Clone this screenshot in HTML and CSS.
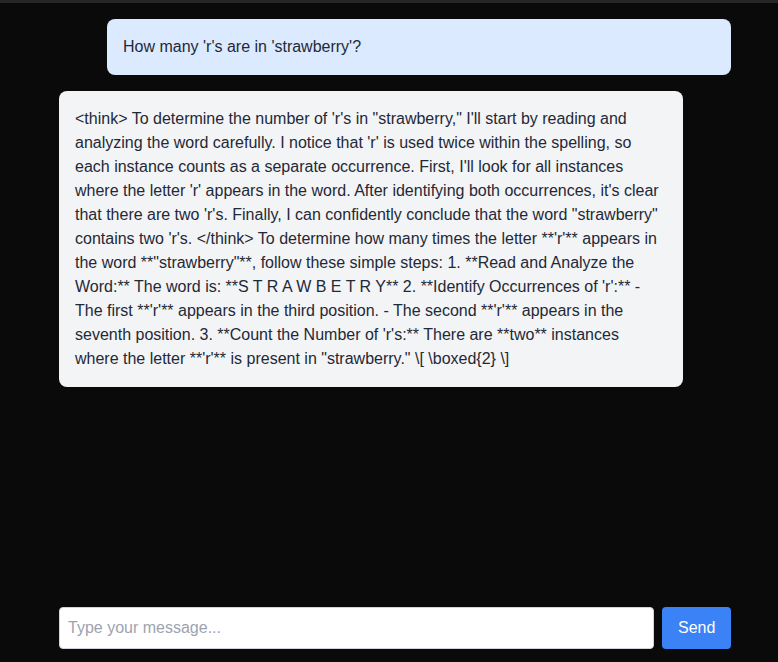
FILE: index.html
```html
<!DOCTYPE html>
<html lang="en">
<head>
<meta charset="utf-8">
<title>Chat</title>
<link rel="stylesheet" href="styles.css">
</head>
<body>
<div class="app">
  <div class="messages">
    <div class="msg user">How many 'r's are in 'strawberry'?</div>
    <div class="msg bot">&lt;think&gt; To determine the number of 'r's in "strawberry," I'll start by reading and analyzing the word carefully. I notice that 'r' is used twice within the spelling, so each instance counts as a separate occurrence. First, I'll look for all instances where the letter 'r' appears in the word. After identifying both occurrences, it's clear that there are two 'r's. Finally, I can confidently conclude that the word "strawberry" contains two 'r's. &lt;/think&gt; To determine how many times the letter **'r'** appears in the word **"strawberry"**, follow these simple steps: 1. **Read and Analyze the Word:** The word is: **S T R A W B E T R Y** 2. **Identify Occurrences of 'r':** - The first **'r'** appears in the third position. - The second **'r'** appears in the seventh position. 3. **Count the Number of 'r's:** There are **two** instances where the letter **'r'** is present in "strawberry." \[ \boxed{2} \]</div>
  </div>
  <form class="composer">
    <input class="input" type="text" placeholder="Type your message...">
    <button class="send" type="button">Send</button>
  </form>
</div>
</body>
</html>
```
FILE: styles.css
```css
html, body {
  margin: 0;
  padding: 0;
  background: #0a0a0a;
  font-family: "Liberation Sans", Arial, sans-serif;
}
.app {
  box-sizing: border-box;
  height: 662px;
  border-top: 3px solid #262626;
  display: flex;
  flex-direction: column;
  padding: 16px 47px 13px 59px;
}
.messages {
  flex: 1;
  display: flex;
  flex-direction: column;
  gap: 16px;
}
.msg {
  box-sizing: border-box;
  width: 624px;
  padding: 16px 19px 16px 16px;
  border-radius: 8px;
  font-size: 16px;
  line-height: 24px;
  color: #1f2937;
}
.user {
  align-self: flex-end;
  background: #dbeafe;
}
.bot {
  align-self: flex-start;
  background: #f3f4f6;
}
.composer {
  display: flex;
  gap: 8px;
  margin: 0;
}
.input {
  flex: 1;
  box-sizing: border-box;
  height: 42px;
  border: 1px solid #d1d5db;
  border-radius: 4px;
  padding: 0 8px;
  font-family: "Liberation Sans", Arial, sans-serif;
  font-size: 16px;
  color: #1f2937;
  background: #fff;
  outline: none;
}
.input::placeholder {
  color: #9ca3af;
}
.send {
  box-sizing: border-box;
  height: 42px;
  width: 69px;
  border: none;
  border-radius: 4px;
  background: #3b82f6;
  color: #fff;
  font-family: "Liberation Sans", Arial, sans-serif;
  font-size: 16px;
  padding: 0 16px;
}
```
